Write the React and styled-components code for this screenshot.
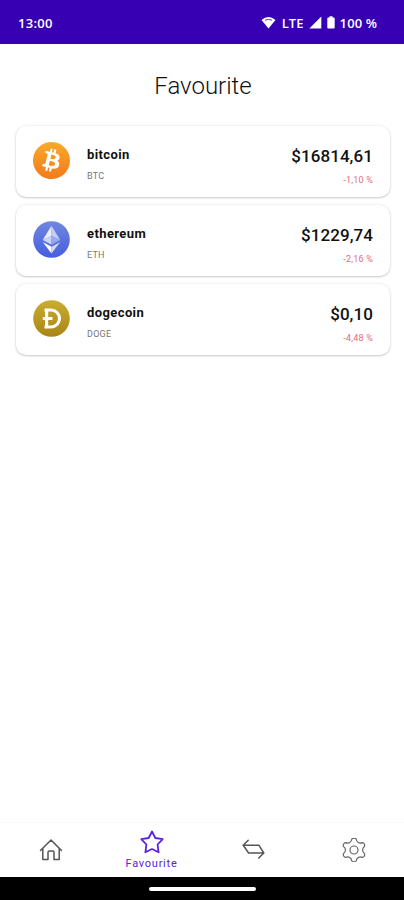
import styled, { createGlobalStyle } from 'styled-components';
import { SiBitcoin } from 'react-icons/si';

const GlobalStyle = createGlobalStyle`
	* {
		box-sizing: border-box;
	}

	body {
		margin: 0;
		background: #fff;
		font-family: Roboto, sans-serif;
	}
`;

const Screen = styled.div`
	display: flex;
	flex-direction: column;
	height: 900px;
	background: #fff;
	overflow: hidden;
`;

const StatusBar = styled.header`
	display: flex;
	justify-content: space-between;
	align-items: center;
	height: 44px;
	padding: 1px 27px 0 18px;
	background: #3700b3;
	color: #fff;
	font-family: 'Open Sans', sans-serif;
	font-size: 13px;
	font-weight: 600;
`;

const Clock = styled.span`
	letter-spacing: 0.3px;
`;

const StatusIcons = styled.div`
	display: flex;
	align-items: center;

	svg {
		display: block;
	}
`;

const Network = styled.span`
	margin: 0 5px 0 6px;
	letter-spacing: 0.1px;
`;

const Battery = styled.span`
	margin-left: 4px;
	letter-spacing: 0.1px;
`;

const Main = styled.main`
	flex: 1;
	padding: 0 14px 0 16px;
`;

const Title = styled.h1`
	margin: 27px 0 24px;
	font-size: 24px;
	font-weight: 300;
	line-height: 31px;
	letter-spacing: 0;
	text-align: center;
	color: #111;
`;

const CoinList = styled.div`
	display: flex;
	flex-direction: column;
	gap: 8px;
`;

const Card = styled.div`
	display: flex;
	height: 71px;
	padding: 16px 17px 0;
	border-radius: 10px;
	background: #fff;
	box-shadow: 0 1px 2px rgba(0, 0, 0, 0.18), 0 0 3px rgba(0, 0, 0, 0.1);

	svg {
		display: block;
		width: 37px;
		height: 37px;
	}
`;

const BitcoinLogo = styled(SiBitcoin)`
	fill: url(#btc);
`;

const Names = styled.div`
	flex: 1;
	margin-left: 17px;
`;

const Name = styled.div`
	margin-top: 4px;
	font-size: 13px;
	font-weight: 700;
	line-height: 18px;
	letter-spacing: 0.4px;
	color: #111;
`;

const Ticker = styled.div`
	margin-top: 6px;
	font-size: 9px;
	line-height: 12px;
	letter-spacing: 0.25px;
	color: #777;
`;

const Values = styled.div`
	text-align: right;
`;

const Price = styled.div`
	margin-top: 3px;
	font-size: 17px;
	font-weight: 500;
	line-height: 22px;
	letter-spacing: 0.08px;
	color: #111;
`;

const Change = styled.div`
	margin-top: 7px;
	font-size: 9px;
	line-height: 12px;
	letter-spacing: 0.2px;
	color: #df6b80;
`;

const TabBar = styled.nav`
	display: grid;
	grid-template-columns: repeat(4, 1fr);
	height: 55px;
	border-top: 1px solid #fafafa;
`;

const Tab = styled.div`
	display: flex;
	flex-direction: column;
	align-items: center;
	padding-top: ${(props) => (props.$active ? '7px' : '15px')};
	color: ${(props) => (props.$active ? '#5a22e0' : '#555')};
	font-size: 11px;
	line-height: 13px;
	letter-spacing: 0.75px;

	svg {
		display: block;
		width: 24px;
		height: 24px;
		fill: none;
		stroke: currentColor;
		stroke-width: ${(props) => (props.$active ? 1.8 : 1.5)};
		stroke-linejoin: round;
		stroke-linecap: round;
	}
`;

const TabLabel = styled.span`
	margin-top: 3px;
`;

const GestureBar = styled.div`
	display: flex;
	justify-content: center;
	align-items: center;
	height: 23px;
	background: #000;
`;

const Handle = styled.div`
	width: 107px;
	height: 4px;
	border-radius: 2px;
	background: #fff;
`;

function WifiIcon() {
	return (
		<svg width="15" height="13" viewBox="0 0 15 13">
			<path d="M0.5 4 Q7.5 -2 14.5 4 L7.5 12.5 Z" fill="#fff" />
			<path d="M4 4.2 Q7.5 2.6 11 4.2" fill="none" stroke="#3700b3" strokeWidth="0.8" />
		</svg>
	);
}

function SignalIcon() {
	return (
		<svg width="13" height="13" viewBox="0 0 13 13">
			<path d="M12.3 0.5V12.5H0.3Z" fill="#fff" />
		</svg>
	);
}

function BatteryIcon() {
	return (
		<svg width="14" height="13" viewBox="0 0 14 13">
			<path d="M7.5 0.3h3v1.3h1.2q1 0 1 1v9q0 1-1 1H6.3q-1 0-1-1v-9q0-1 1-1h1.2z" fill="#fff" />
		</svg>
	);
}

function BitcoinIcon() {
	return (
		<>
			<svg style={{ width: 0, height: 0 }}>
				<defs>
					<linearGradient id="btc" x1="0" y1="0" x2="0" y2="1">
						<stop offset="0" stopColor="#f9aa28" />
						<stop offset="1" stopColor="#f37a1b" />
					</linearGradient>
				</defs>
			</svg>
			<BitcoinLogo />
		</>
	);
}

function EthereumIcon() {
	return (
		<svg viewBox="0 0 38 38">
			<defs>
				<linearGradient id="eth" x1="0" y1="0" x2="0" y2="1">
					<stop offset="0" stopColor="#7187df" />
					<stop offset="1" stopColor="#465de0" />
				</linearGradient>
			</defs>
			<circle cx="19" cy="19" r="18.8" fill="url(#eth)" />
			<path d="M19 5 10 19.5 19 15.5Z" fill="#e9edfc" />
			<path d="M19 5 28 19.5 19 15.5Z" fill="#c3cdf6" />
			<path d="M10 19.5 19 15.5V24.5Z" fill="#c9d2f7" />
			<path d="M28 19.5 19 15.5V24.5Z" fill="#98a8ee" />
			<path d="M10 21.5 19 26.5V33.5Z" fill="#fff" />
			<path d="M28 21.5 19 26.5V33.5Z" fill="#d0d8f9" />
		</svg>
	);
}

function DogecoinIcon() {
	return (
		<svg viewBox="0 0 38 38">
			<defs>
				<linearGradient id="doge" x1="0" y1="0" x2="0" y2="1">
					<stop offset="0" stopColor="#c9ad2f" />
					<stop offset="1" stopColor="#a98516" />
				</linearGradient>
			</defs>
			<circle cx="19" cy="19" r="18.8" fill="url(#doge)" />
			<path
				d="M11.8 10.3H18.5A8.6 8.6 0 0 1 18.5 27.7H11.8M14 10.3V27.7M10 19H20"
				fill="none"
				stroke="#fff"
				strokeWidth="3.2"
			/>
		</svg>
	);
}

function HomeIcon() {
	return (
		<svg viewBox="0 0 24 24">
			<path d="M1.5 12.5 12 2 22.5 12.5M3.8 10.5V21.5H9V14.3Q9 13 10.3 13H13.7Q15 13 15 14.3V21.5H20.2V10.5" />
		</svg>
	);
}

function StarIcon() {
	return (
		<svg viewBox="0 0 24 24">
			<path d="M12 1.5 15.3 8 22.7 9.2 17.6 14.5 18.6 22.3 12 19 5.4 22.3 6.4 14.5 1.3 9.2 8.7 8Z" />
		</svg>
	);
}

function SwapIcon() {
	return (
		<svg viewBox="0 0 24 24">
			<path d="M7.2 2.2 2.2 7.2H17.8L22.8 15H7.6L2.2 7.2M22.8 15 17.8 20" />
		</svg>
	);
}

function GearIcon() {
	return (
		<svg viewBox="0 0 24 24">
			<g strokeWidth="1.2" stroke="#666">
				<path d="M9.7 1.24A2.8 2.8 0 0 1 14.3 1.24A4 4 0 0 0 20.2 4.64A2.8 2.8 0 0 1 22.46 8.6A4 4 0 0 0 22.46 15.4A2.8 2.8 0 0 1 20.2 19.36A4 4 0 0 0 14.3 22.76A2.8 2.8 0 0 1 9.7 22.76A4 4 0 0 0 3.8 19.36A2.8 2.8 0 0 1 1.54 15.4A4 4 0 0 0 1.54 8.6A2.8 2.8 0 0 1 3.8 4.64A4 4 0 0 0 9.7 1.24Z" />
				<circle cx="12" cy="12" r="4" />
			</g>
		</svg>
	);
}

const coins = [
	{ name: 'bitcoin', ticker: 'BTC', price: '$16814,61', change: '-1,10 %', icon: <BitcoinIcon /> },
	{ name: 'ethereum', ticker: 'ETH', price: '$1229,74', change: '-2,16 %', icon: <EthereumIcon /> },
	{ name: 'dogecoin', ticker: 'DOGE', price: '$0,10', change: '-4,48 %', icon: <DogecoinIcon /> },
];

function CoinCard({ coin }) {
	const { name, ticker, price, change, icon } = coin;

	return (
		<Card>
			{icon}
			<Names>
				<Name>{name}</Name>
				<Ticker>{ticker}</Ticker>
			</Names>
			<Values>
				<Price>{price}</Price>
				<Change>{change}</Change>
			</Values>
		</Card>
	);
}

export default function App() {
	return (
		<>
			<GlobalStyle />
			<Screen>
				<StatusBar>
					<Clock>13:00</Clock>
					<StatusIcons>
						<WifiIcon />
						<Network>LTE</Network>
						<SignalIcon />
						<BatteryIcon />
						<Battery>100 %</Battery>
					</StatusIcons>
				</StatusBar>
				<Main>
					<Title>Favourite</Title>
					<CoinList>
						{coins.map((coin) => (
							<CoinCard key={coin.ticker} coin={coin} />
						))}
					</CoinList>
				</Main>
				<TabBar>
					<Tab>
						<HomeIcon />
					</Tab>
					<Tab $active>
						<StarIcon />
						<TabLabel>Favourite</TabLabel>
					</Tab>
					<Tab>
						<SwapIcon />
					</Tab>
					<Tab>
						<GearIcon />
					</Tab>
				</TabBar>
				<GestureBar>
					<Handle />
				</GestureBar>
			</Screen>
		</>
	);
}
